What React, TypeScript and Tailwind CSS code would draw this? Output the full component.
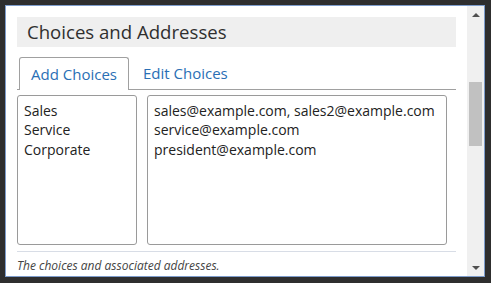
const CHOICES = ["Sales", "Service", "Corporate"];

const ADDRESSES = [
  "sales@example.com, sales2@example.com",
  "service@example.com",
  "president@example.com",
];

function ScrollBar() {
  return (
    <div className="flex w-[17px] flex-col items-center bg-[#f0f0f0]">
      <div className="flex h-[17px] w-full items-center justify-center">
        <div className="h-0 w-0 border-x-[4px] border-b-[4px] border-x-transparent border-b-[#505050]" />
      </div>
      <div className="mt-[59px] h-[64px] w-[13px] bg-[#c1c1c1]" />
      <div className="flex-1" />
      <div className="flex h-[17px] w-full items-center justify-center">
        <div className="h-0 w-0 border-x-[4px] border-t-[4px] border-x-transparent border-t-[#505050]" />
      </div>
    </div>
  );
}

export default function App() {
  return (
    <div className="h-[283px] w-[491px] overflow-hidden bg-[#2e2e2e] p-[5px] font-['Open_Sans',sans-serif]">
      <div className="flex h-[272px] w-[480px] border border-[#7d9ccb] bg-white">
        <div className="flex-1 overflow-hidden px-[11px] pt-[11px]">
          <div className="flex h-[30px] items-center bg-[#efefef] px-[10px] text-[18.6px] text-[#2f2f2f]">
            Choices and Addresses
          </div>

          <div className="mt-[10px] flex h-[33px] border-b border-[#a0a0a0] pl-[2px]">
            <div className="-mb-px flex w-[110px] items-center justify-center rounded-t-[3px] border border-b-0 border-[#a0a0a0] bg-white text-[15px] text-[#2a6fb5]">
              Add Choices
            </div>
            <div className="flex items-center pl-[14px] text-[15px] text-[#2a6fb5]">
              Edit Choices
            </div>
          </div>

          <div className="mt-[5px] flex gap-[10px] text-[14px] leading-[1.375] text-[#222]">
            <div className="h-[150px] w-[120px] rounded-[3px] border border-[#9a9a9a] px-[6px] pt-[5px]">
              {CHOICES.map((choice) => (
                <div key={choice}>{choice}</div>
              ))}
            </div>
            <div className="h-[150px] w-[300px] rounded-[3px] border border-[#9a9a9a] px-[6px] pt-[5px]">
              {ADDRESSES.map((address) => (
                <div key={address} className="whitespace-nowrap">
                  {address}
                </div>
              ))}
            </div>
          </div>

          <div className="mt-[6px] border-t border-[#d8dde6] pt-[5px] text-[12px] italic text-[#444]">
            The choices and associated addresses.
          </div>
        </div>

        <ScrollBar />
      </div>
    </div>
  );
}
